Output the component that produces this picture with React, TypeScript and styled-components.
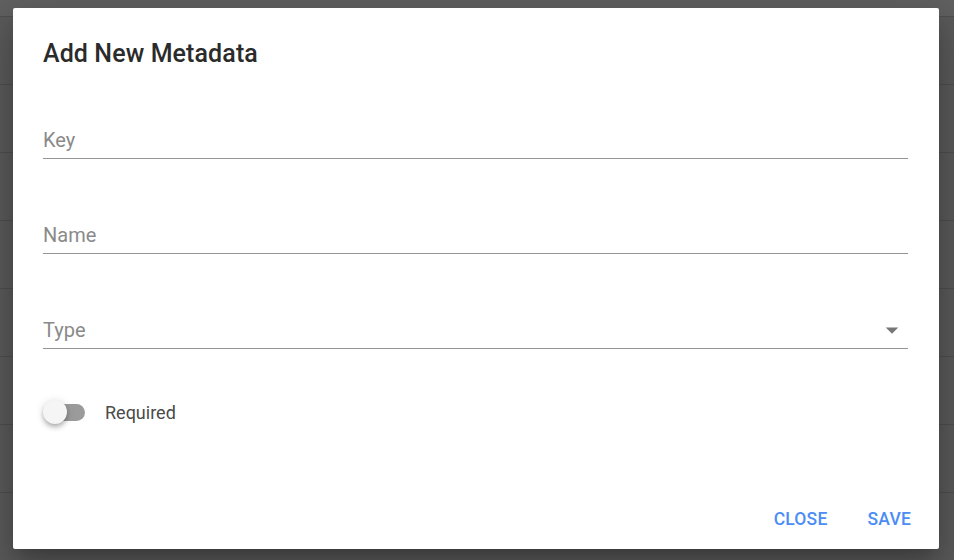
import React from "react";
import styled, { createGlobalStyle } from "styled-components";

const GlobalStyle = createGlobalStyle`
  html, body {
    margin: 0;
    padding: 0;
    width: 954px;
    height: 560px;
    overflow: hidden;
    font-family: Roboto, "Liberation Sans", Arial, sans-serif;
  }
`;

const Page = styled.div`
  position: relative;
  width: 954px;
  height: 560px;
  background: #5b5b5b;
  overflow: hidden;
`;

const TableBehind = styled.div`
  display: flex;
  flex-direction: column;
`;

const TableHead = styled.div`
  height: 16px;
  background: #616161;
  border-bottom: 1px solid #4f4f4f;
`;

const TableRow = styled.div`
  height: 67px;
  border-bottom: 1px solid #4f4f4f;
`;

const Dialog = styled.div`
  position: absolute;
  left: 13px;
  top: 8px;
  width: 926px;
  height: 541px;
  box-sizing: border-box;
  background: #fff;
  border-radius: 2px;
  box-shadow: 0 11px 15px -7px rgba(0, 0, 0, 0.2),
    0 24px 38px 3px rgba(0, 0, 0, 0.14), 0 9px 46px 8px rgba(0, 0, 0, 0.12);
  display: flex;
  flex-direction: column;
  padding: 26px 0 0;
`;

const Title = styled.h2`
  margin: 0;
  padding: 0 30px;
  font-size: 25px;
  line-height: 40px;
  font-weight: 500;
  color: #2b2b2b;
  letter-spacing: 0.1px;
`;

const Form = styled.div`
  display: flex;
  flex-direction: column;
  gap: 61px;
  padding: 51px 31px 0 30px;
`;

const Field = styled.div`
  display: flex;
  align-items: center;
  height: 30px;
  padding-bottom: 3px;
  border-bottom: 1px solid #949494;
`;

const Label = styled.span`
  flex: 1;
  font-size: 20px;
  line-height: 30px;
  color: #8a8a8a;
`;

const Arrow = styled.svg`
  width: 30px;
  height: 30px;
  margin-right: 1px;
`;

const SwitchRow = styled.label`
  display: flex;
  align-items: center;
  gap: 20px;
  height: 30px;
  margin: 48px 30px 0;
`;

const Switch = styled.span`
  position: relative;
  width: 42px;
  height: 30px;
  flex: none;
`;

const Track = styled.span`
  position: absolute;
  left: 3px;
  right: 0;
  top: 7px;
  height: 17px;
  border-radius: 9px;
  background: #9b9b9b;
`;

const Thumb = styled.span`
  position: absolute;
  left: 0;
  top: 3px;
  width: 24px;
  height: 24px;
  border-radius: 50%;
  background: #f5f5f5;
  box-shadow: 0 2px 4px -1px rgba(0, 0, 0, 0.2),
    0 4px 5px 0 rgba(0, 0, 0, 0.14), 0 1px 10px 0 rgba(0, 0, 0, 0.12);
`;

const SwitchText = styled.span`
  font-size: 18px;
  color: #4a4a4a;
`;

const Actions = styled.div`
  margin-top: auto;
  display: flex;
  justify-content: flex-end;
  padding: 0 8px 8px 0;
`;

const TextButton = styled.button`
  border: 0;
  background: transparent;
  height: 45px;
  padding: 0 20px;
  font-family: inherit;
  font-size: 17.5px;
  font-weight: 500;
  letter-spacing: 0.2px;
  text-transform: uppercase;
  color: #4b8df5;
  cursor: pointer;
`;

export default function App() {
  return (
    <Page>
      <GlobalStyle />
      <TableBehind>
        <TableHead />
        {Array.from({ length: 8 }).map((_, i) => (
          <TableRow key={i} />
        ))}
      </TableBehind>
      <Dialog>
        <Title>Add New Metadata</Title>
        <Form>
          <Field>
            <Label>Key</Label>
          </Field>
          <Field>
            <Label>Name</Label>
          </Field>
          <Field>
            <Label>Type</Label>
            <Arrow viewBox="0 0 24 24">
              <path d="M7 10l5 5 5-5z" fill="#777" />
            </Arrow>
          </Field>
        </Form>
        <SwitchRow>
          <Switch>
            <Track />
            <Thumb />
          </Switch>
          <SwitchText>Required</SwitchText>
        </SwitchRow>
        <Actions>
          <TextButton>Close</TextButton>
          <TextButton>Save</TextButton>
        </Actions>
      </Dialog>
    </Page>
  );
}
